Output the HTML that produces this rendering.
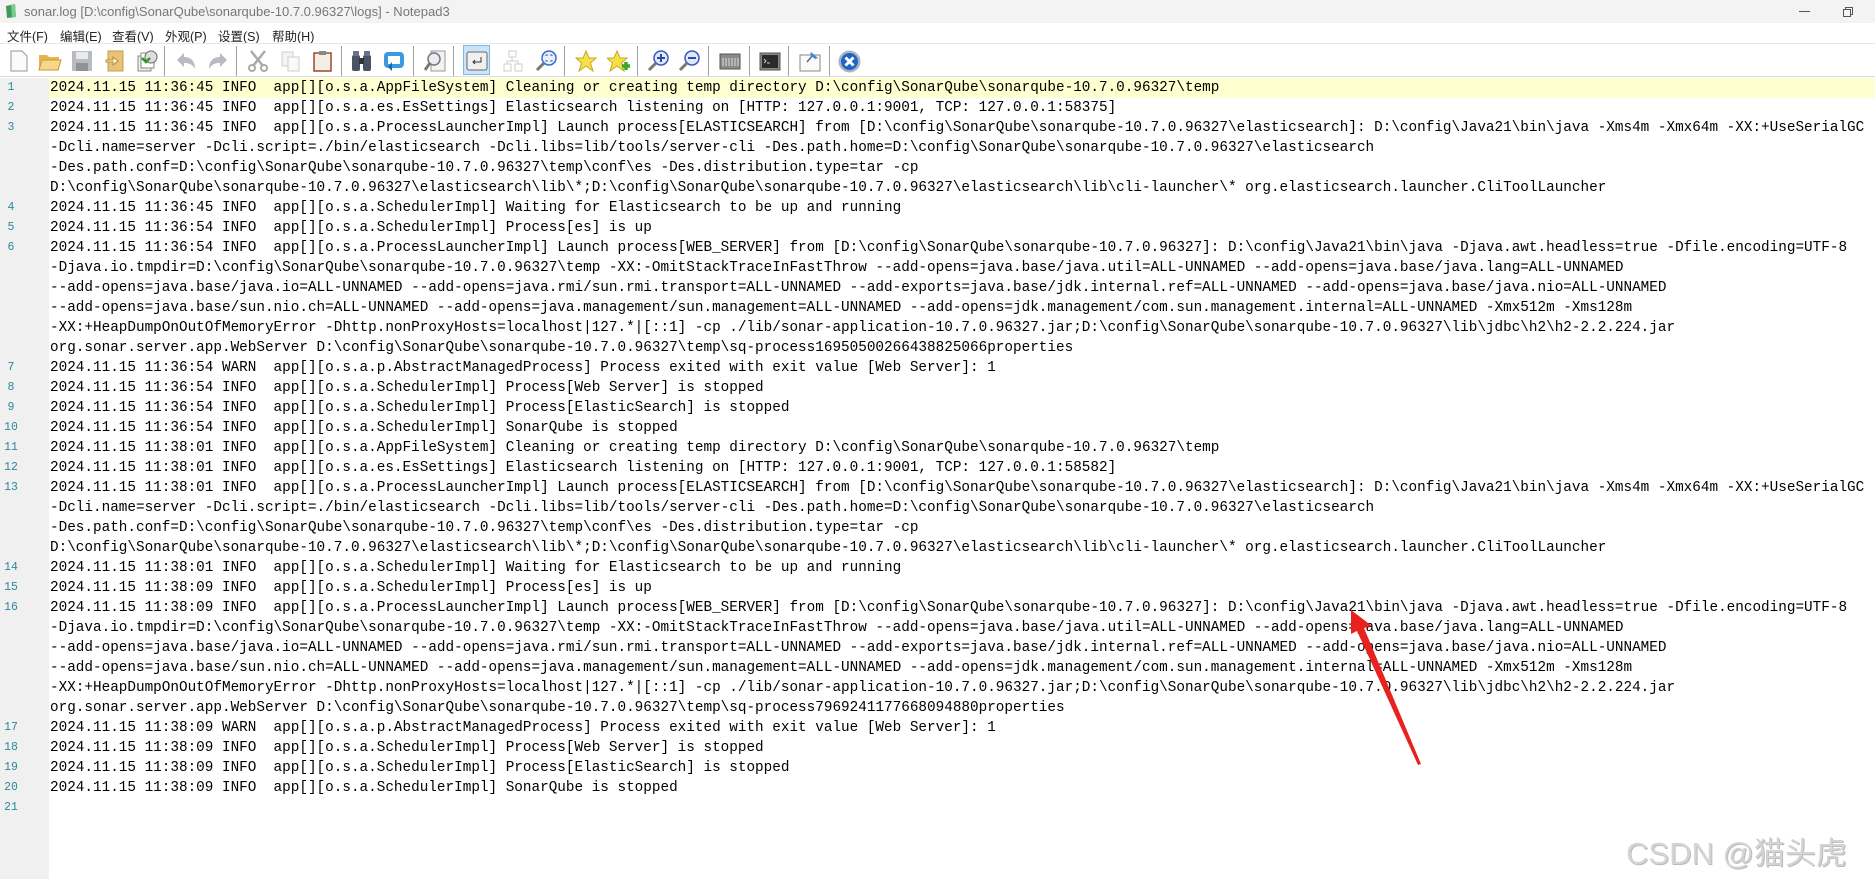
<!DOCTYPE html>
<html><head><meta charset="utf-8">
<style>
*{margin:0;padding:0;box-sizing:border-box}
body{width:1875px;height:879px;overflow:hidden;background:#fff;position:relative;font-family:"Liberation Sans","Noto Sans CJK SC",sans-serif}
#title{position:absolute;left:0;top:0;width:1875px;height:23px;background:#f3f3f3}
#title .t{position:absolute;left:24px;top:4px;font-size:13px;color:#777;white-space:nowrap}
#menu{position:absolute;left:0;top:23px;width:1875px;height:20px;background:#fff;font-size:12.5px;color:#222}
#menu span{position:absolute;top:3px;white-space:nowrap}
#tb{position:absolute;left:0;top:43px;width:1875px;height:34px;background:#fff;border-top:1px solid #e8e8e8;border-bottom:1px solid #dcdcdc}
#tb svg{position:absolute;top:6px}
.sep{position:absolute;top:2px;width:1px;height:30px;background:#a0a0a0}
#gut{position:absolute;left:0;top:78px;width:49px;height:801px;background:#f0f0f0}
#hl{position:absolute;left:49px;top:78px;width:1826px;height:20px;background:#ffffd0}
#txt{position:absolute;left:50px;top:78px;font-family:"Liberation Mono",monospace;font-size:14.33px;line-height:20px;color:#000;white-space:pre}
#nums{position:absolute;left:0;top:78px;width:22px;font-family:"Liberation Mono",monospace;font-size:11.5px;line-height:20px;color:#2a8a9a;text-align:center;white-space:pre}
#wm{position:absolute;left:1626px;top:828px;font-size:31px;color:#d4d4d4;white-space:nowrap;text-shadow:1px 1px 0 #bbb}
</style></head><body>
<div id="title">
<svg style="position:absolute;left:4px;top:3px" width="14" height="16"><path d="M2 3 L11 1 L12 14 L3 15Z" fill="#3c9a5a"/><path d="M7 2 L11 1 L12 14 L8 14Z" fill="#7cc98f"/></svg>
<span class="t">sonar.log [D:\config\SonarQube\sonarqube-10.7.0.96327\logs] - Notepad3</span>
<div style="position:absolute;left:1799px;top:11px;width:11px;height:1px;background:#555"></div>
<div style="position:absolute;left:1845px;top:7px;width:8px;height:8px;border:1px solid #555;background:#f3f3f3"></div>
<div style="position:absolute;left:1843px;top:9px;width:8px;height:8px;border:1px solid #555;background:#f3f3f3"></div>
</div>
<div id="menu">
<span style="left:7px">文件(F)</span><span style="left:60px">编辑(E)</span><span style="left:112px">查看(V)</span><span style="left:165px">外观(P)</span><span style="left:218px">设置(S)</span><span style="left:272px">帮助(H)</span>
</div>
<div id="tb">
<svg style="left:9px" width="20" height="22"><path d="M2 1h11l5 5v15H2z" fill="#fbfbfb" stroke="#8a9aa6"/></svg>
<svg style="left:38px" width="24" height="22"><path d="M1 5h8l2 2h10v13H1z" fill="#e5b550"/><path d="M4 10h19l-3 10H1z" fill="#f7d88a" stroke="#c9953a"/></svg>
<svg style="left:71px" width="22" height="22"><rect x="1" y="1" width="20" height="20" fill="#b8bcc0"/><rect x="5" y="2" width="12" height="7" fill="#e8eaec"/><rect x="5" y="13" width="12" height="8" fill="#8e9398"/></svg>
<svg style="left:105px" width="20" height="22"><rect x="3" y="1" width="15" height="20" fill="#e9c27a" stroke="#c99a4a"/><path d="M1 10h7V7l5 4-5 4v-3H1z" fill="#fff5d0" stroke="#b88a3a"/></svg>
<svg style="left:136px" width="22" height="22"><rect x="2" y="6" width="13" height="15" fill="#eee" stroke="#888"/><rect x="5" y="3" width="13" height="15" fill="#fff" stroke="#888"/><circle cx="15" cy="7" r="6" fill="#ddd" stroke="#666"/><path d="M6 8l4 4 4-4" stroke="#2a9a2a" stroke-width="2.5" fill="none"/></svg>
<div class="sep" style="left:164px"></div>
<svg style="left:175px" width="22" height="22"><path d="M2 10 L9 3 V7 C16 7 20 11 20 19 C17 14 14 13 9 13 V17Z" fill="#b8bcc2"/></svg>
<svg style="left:207px" width="22" height="22"><path d="M20 10 L13 3 V7 C6 7 2 11 2 19 C5 14 8 13 13 13 V17Z" fill="#b8bcc2"/></svg>
<div class="sep" style="left:236px"></div>
<svg style="left:247px" width="22" height="22"><path d="M4 1 L16 16 M18 1 L6 16" stroke="#aaa" stroke-width="2.5"/><circle cx="5" cy="18" r="3" fill="none" stroke="#aaa" stroke-width="2"/><circle cx="17" cy="18" r="3" fill="none" stroke="#aaa" stroke-width="2"/></svg>
<svg style="left:281px" width="20" height="22"><rect x="1" y="2" width="11" height="14" fill="#f4f4f4" stroke="#ccc"/><rect x="7" y="7" width="11" height="14" fill="#fafafa" stroke="#ccc"/></svg>
<svg style="left:313px" width="19" height="22"><rect x="1" y="3" width="17" height="18" fill="#f3efe6" stroke="#9a4a2a" stroke-width="1.5"/><rect x="6" y="1" width="7" height="4" fill="#888"/></svg>
<div class="sep" style="left:341px"></div>
<svg style="left:350px" width="23" height="22"><rect x="2" y="5" width="8" height="16" rx="2" fill="#4a5268"/><rect x="13" y="5" width="8" height="16" rx="2" fill="#4a5268"/><rect x="9" y="8" width="5" height="6" fill="#333"/><rect x="3" y="1" width="6" height="5" fill="#6a7288"/><rect x="14" y="1" width="6" height="5" fill="#6a7288"/></svg>
<svg style="left:383px" width="22" height="22"><rect x="1" y="2" width="20" height="16" rx="4" fill="#3a9ae0"/><rect x="5" y="6" width="12" height="8" fill="#fff"/><path d="M9 12l-4 5 4 4z" fill="#1a6ab0"/></svg>
<div class="sep" style="left:413px"></div>
<svg style="left:424px" width="22" height="22"><rect x="7" y="1" width="14" height="20" fill="#f2f2f2" stroke="#999"/><circle cx="10" cy="9" r="6" fill="#e8eef4" stroke="#777" stroke-width="1.5"/><path d="M6 13 L1 20" stroke="#777" stroke-width="3"/></svg>
<div class="sep" style="left:453px"></div>
<div style="position:absolute;left:463px;top:1px;width:27px;height:30px;background:#cce4f7;border:1px solid #7fb8e6"></div>
<svg style="left:466px" width="22" height="22"><rect x="1" y="2" width="20" height="18" rx="2" fill="#f0f0f0" stroke="#666"/><path d="M15 7v5H7M9 10l-2 2 2 2" stroke="#333" fill="none"/></svg>
<svg style="left:503px" width="20" height="22"><rect x="6" y="1" width="7" height="6" fill="none" stroke="#ccc"/><rect x="1" y="14" width="7" height="7" fill="none" stroke="#ccc"/><rect x="12" y="14" width="7" height="7" fill="none" stroke="#ccc"/><path d="M9 7v4M4 14v-3h11v3" stroke="#ccc" fill="none"/></svg>
<svg style="left:535px" width="22" height="22"><circle cx="14" cy="8" r="7" fill="#e8f0fa" stroke="#3a6ac8" stroke-width="1.5"/><path d="M9 13 L2 20" stroke="#777" stroke-width="3"/><path d="M11 6V5h2M17 5h0M11 10v1h2M15 11h2v-1M15 5h2v1" stroke="#3a6ac8" fill="none"/></svg>
<div class="sep" style="left:564px"></div>
<svg style="left:575px" width="22" height="22"><path d="M11 1 L14 8 L21 8 L15.5 13 L18 21 L11 16 L4 21 L6.5 13 L1 8 L8 8Z" fill="#f6e04a" stroke="#c8a820"/></svg>
<svg style="left:607px" width="24" height="22"><path d="M10 1 L13 8 L20 8 L14.5 13 L17 21 L10 16 L3 21 L5.5 13 L0 8 L7 8Z" fill="#f6e04a" stroke="#c8a820"/><path d="M15 16h8M19 12v8" stroke="#3aa82a" stroke-width="3.5"/></svg>
<div class="sep" style="left:637px"></div>
<svg style="left:647px" width="22" height="22"><circle cx="14" cy="8" r="7" fill="#dfe8f6" stroke="#3a5ab8" stroke-width="1.5"/><path d="M9 13 L2 20" stroke="#777" stroke-width="3"/><path d="M10 8h8M14 4v8" stroke="#2a4ab0" stroke-width="2"/></svg>
<svg style="left:678px" width="22" height="22"><circle cx="14" cy="8" r="7" fill="#dfe8f6" stroke="#3a5ab8" stroke-width="1.5"/><path d="M9 13 L2 20" stroke="#777" stroke-width="3"/><path d="M10 8h8" stroke="#2a4ab0" stroke-width="2"/></svg>
<div class="sep" style="left:708px"></div>
<svg style="left:719px" width="22" height="22"><rect x="1" y="4" width="20" height="15" fill="#8a8a8a" stroke="#555"/><path d="M4 8v8M7 8v8M10 8v8M13 8v8M16 8v8M19 8v8" stroke="#ddd"/></svg>
<div class="sep" style="left:749px"></div>
<svg style="left:759px" width="22" height="22"><rect x="1" y="3" width="20" height="17" fill="#888" stroke="#555"/><rect x="3" y="5" width="16" height="13" fill="#2a2a2a"/><path d="M5 9l2 2-2 2M8 13h3" stroke="#ccc" fill="none"/></svg>
<div class="sep" style="left:788px"></div>
<svg style="left:799px" width="22" height="22"><rect x="1" y="5" width="20" height="16" fill="#fafafa" stroke="#888"/><path d="M8 12 L14 5" stroke="#666" stroke-width="1.5"/><path d="M12 2l7 6-3 1-5-4z" fill="#3a8ae0"/></svg>
<div class="sep" style="left:829px"></div>
<svg style="left:838px" width="23" height="23"><circle cx="11.5" cy="11.5" r="11" fill="#aab4c0"/><circle cx="11.5" cy="11.5" r="8.5" fill="#1e64c8"/><path d="M7.5 7.5l8 8M15.5 7.5l-8 8" stroke="#fff" stroke-width="3"/></svg>
</div>
<div id="gut"></div>
<div id="hl"></div>
<div id="nums">1
2
3



4
5
6





7
8
9
10
11
12
13



14
15
16





17
18
19
20
21</div>
<div id="txt">2024.11.15 11:36:45 INFO  app[][o.s.a.AppFileSystem] Cleaning or creating temp directory D:\config\SonarQube\sonarqube-10.7.0.96327\temp
2024.11.15 11:36:45 INFO  app[][o.s.a.es.EsSettings] Elasticsearch listening on [HTTP: 127.0.0.1:9001, TCP: 127.0.0.1:58375]
2024.11.15 11:36:45 INFO  app[][o.s.a.ProcessLauncherImpl] Launch process[ELASTICSEARCH] from [D:\config\SonarQube\sonarqube-10.7.0.96327\elasticsearch]: D:\config\Java21\bin\java -Xms4m -Xmx64m -XX:+UseSerialGC
-Dcli.name=server -Dcli.script=./bin/elasticsearch -Dcli.libs=lib/tools/server-cli -Des.path.home=D:\config\SonarQube\sonarqube-10.7.0.96327\elasticsearch
-Des.path.conf=D:\config\SonarQube\sonarqube-10.7.0.96327\temp\conf\es -Des.distribution.type=tar -cp
D:\config\SonarQube\sonarqube-10.7.0.96327\elasticsearch\lib\*;D:\config\SonarQube\sonarqube-10.7.0.96327\elasticsearch\lib\cli-launcher\* org.elasticsearch.launcher.CliToolLauncher
2024.11.15 11:36:45 INFO  app[][o.s.a.SchedulerImpl] Waiting for Elasticsearch to be up and running
2024.11.15 11:36:54 INFO  app[][o.s.a.SchedulerImpl] Process[es] is up
2024.11.15 11:36:54 INFO  app[][o.s.a.ProcessLauncherImpl] Launch process[WEB_SERVER] from [D:\config\SonarQube\sonarqube-10.7.0.96327]: D:\config\Java21\bin\java -Djava.awt.headless=true -Dfile.encoding=UTF-8
-Djava.io.tmpdir=D:\config\SonarQube\sonarqube-10.7.0.96327\temp -XX:-OmitStackTraceInFastThrow --add-opens=java.base/java.util=ALL-UNNAMED --add-opens=java.base/java.lang=ALL-UNNAMED
--add-opens=java.base/java.io=ALL-UNNAMED --add-opens=java.rmi/sun.rmi.transport=ALL-UNNAMED --add-exports=java.base/jdk.internal.ref=ALL-UNNAMED --add-opens=java.base/java.nio=ALL-UNNAMED
--add-opens=java.base/sun.nio.ch=ALL-UNNAMED --add-opens=java.management/sun.management=ALL-UNNAMED --add-opens=jdk.management/com.sun.management.internal=ALL-UNNAMED -Xmx512m -Xms128m
-XX:+HeapDumpOnOutOfMemoryError -Dhttp.nonProxyHosts=localhost|127.*|[::1] -cp ./lib/sonar-application-10.7.0.96327.jar;D:\config\SonarQube\sonarqube-10.7.0.96327\lib\jdbc\h2\h2-2.2.224.jar
org.sonar.server.app.WebServer D:\config\SonarQube\sonarqube-10.7.0.96327\temp\sq-process16950500266438825066properties
2024.11.15 11:36:54 WARN  app[][o.s.a.p.AbstractManagedProcess] Process exited with exit value [Web Server]: 1
2024.11.15 11:36:54 INFO  app[][o.s.a.SchedulerImpl] Process[Web Server] is stopped
2024.11.15 11:36:54 INFO  app[][o.s.a.SchedulerImpl] Process[ElasticSearch] is stopped
2024.11.15 11:36:54 INFO  app[][o.s.a.SchedulerImpl] SonarQube is stopped
2024.11.15 11:38:01 INFO  app[][o.s.a.AppFileSystem] Cleaning or creating temp directory D:\config\SonarQube\sonarqube-10.7.0.96327\temp
2024.11.15 11:38:01 INFO  app[][o.s.a.es.EsSettings] Elasticsearch listening on [HTTP: 127.0.0.1:9001, TCP: 127.0.0.1:58582]
2024.11.15 11:38:01 INFO  app[][o.s.a.ProcessLauncherImpl] Launch process[ELASTICSEARCH] from [D:\config\SonarQube\sonarqube-10.7.0.96327\elasticsearch]: D:\config\Java21\bin\java -Xms4m -Xmx64m -XX:+UseSerialGC
-Dcli.name=server -Dcli.script=./bin/elasticsearch -Dcli.libs=lib/tools/server-cli -Des.path.home=D:\config\SonarQube\sonarqube-10.7.0.96327\elasticsearch
-Des.path.conf=D:\config\SonarQube\sonarqube-10.7.0.96327\temp\conf\es -Des.distribution.type=tar -cp
D:\config\SonarQube\sonarqube-10.7.0.96327\elasticsearch\lib\*;D:\config\SonarQube\sonarqube-10.7.0.96327\elasticsearch\lib\cli-launcher\* org.elasticsearch.launcher.CliToolLauncher
2024.11.15 11:38:01 INFO  app[][o.s.a.SchedulerImpl] Waiting for Elasticsearch to be up and running
2024.11.15 11:38:09 INFO  app[][o.s.a.SchedulerImpl] Process[es] is up
2024.11.15 11:38:09 INFO  app[][o.s.a.ProcessLauncherImpl] Launch process[WEB_SERVER] from [D:\config\SonarQube\sonarqube-10.7.0.96327]: D:\config\Java21\bin\java -Djava.awt.headless=true -Dfile.encoding=UTF-8
-Djava.io.tmpdir=D:\config\SonarQube\sonarqube-10.7.0.96327\temp -XX:-OmitStackTraceInFastThrow --add-opens=java.base/java.util=ALL-UNNAMED --add-opens=java.base/java.lang=ALL-UNNAMED
--add-opens=java.base/java.io=ALL-UNNAMED --add-opens=java.rmi/sun.rmi.transport=ALL-UNNAMED --add-exports=java.base/jdk.internal.ref=ALL-UNNAMED --add-opens=java.base/java.nio=ALL-UNNAMED
--add-opens=java.base/sun.nio.ch=ALL-UNNAMED --add-opens=java.management/sun.management=ALL-UNNAMED --add-opens=jdk.management/com.sun.management.internal=ALL-UNNAMED -Xmx512m -Xms128m
-XX:+HeapDumpOnOutOfMemoryError -Dhttp.nonProxyHosts=localhost|127.*|[::1] -cp ./lib/sonar-application-10.7.0.96327.jar;D:\config\SonarQube\sonarqube-10.7.0.96327\lib\jdbc\h2\h2-2.2.224.jar
org.sonar.server.app.WebServer D:\config\SonarQube\sonarqube-10.7.0.96327\temp\sq-process7969241177668094880properties
2024.11.15 11:38:09 WARN  app[][o.s.a.p.AbstractManagedProcess] Process exited with exit value [Web Server]: 1
2024.11.15 11:38:09 INFO  app[][o.s.a.SchedulerImpl] Process[Web Server] is stopped
2024.11.15 11:38:09 INFO  app[][o.s.a.SchedulerImpl] Process[ElasticSearch] is stopped
2024.11.15 11:38:09 INFO  app[][o.s.a.SchedulerImpl] SonarQube is stopped
</div>
<svg style="position:absolute;left:0;top:0" width="1875" height="879"><path d="M1351 610 L1372 626 L1364 628 L1421 764 L1418 765 L1357 631 L1351 634 Z" fill="#e8231f"/></svg>
<div id="wm">CSDN @猫头虎</div>
</body></html>
